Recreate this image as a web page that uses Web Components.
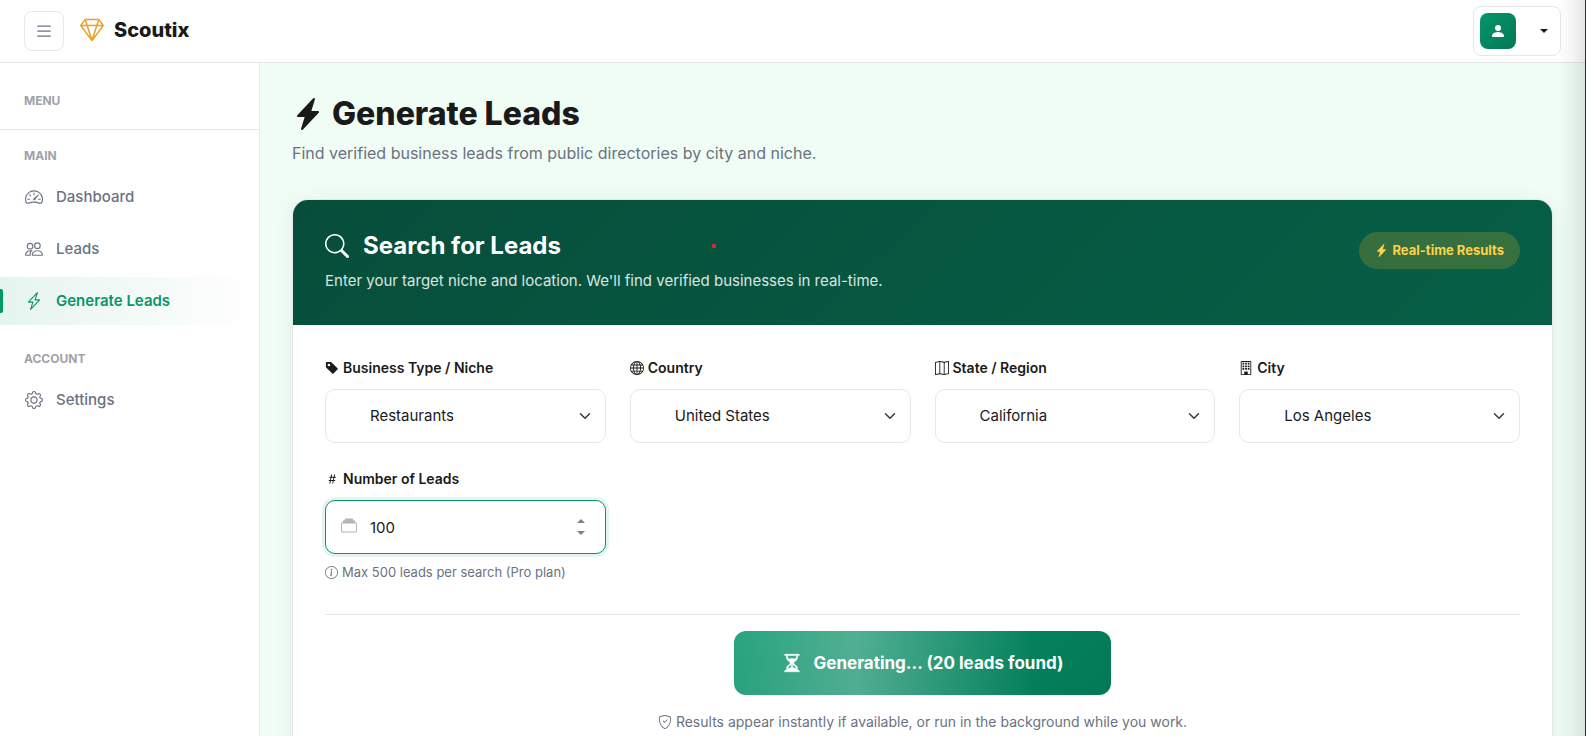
<!DOCTYPE html>
<html lang="en">
<head>
<meta charset="UTF-8">
<meta name="viewport" content="width=device-width, initial-scale=1.0">
<title>Scoutix - Generate Leads</title>
<style>
  :root {
    --brand: #059669;
    --brand-dark: #047857;
    --brand-deep: #064e3b;
    --page: #f0fdf4;
    --ink: #1a1a1a;
    --muted: #6b7280;
    --faint: #a1a1aa;
    --line: #e5e7eb;
    --gold: #fcd34d;
  }
  html, body {
    margin: 0;
    height: 100%;
    overflow: hidden;
  }
  body {
    background: var(--page);
    color: var(--ink);
    font-family: Inter, "Liberation Sans", sans-serif;
    font-size: 15px;
    line-height: 24px;
  }
</style>
</head>
<body>
<sx-app>
  <sx-topbar slot="top" brand="Scoutix"></sx-topbar>
  <sx-sidebar slot="side">
    <sx-nav-group label="Main">
      <sx-nav-item icon="speedometer" href="#dashboard">Dashboard</sx-nav-item>
      <sx-nav-item icon="people" href="#leads">Leads</sx-nav-item>
      <sx-nav-item icon="bolt" href="#generate" active>Generate Leads</sx-nav-item>
    </sx-nav-group>
    <sx-nav-group label="Account">
      <sx-nav-item icon="gear" href="#settings">Settings</sx-nav-item>
    </sx-nav-group>
  </sx-sidebar>
  <sx-page-title icon="bolt-fill" heading="Generate Leads">Find verified business leads from public directories by city and niche.</sx-page-title>
  <sx-search-card heading="Search for Leads" badge="Real-time Results">
    <span slot="intro">Enter your target niche and location. We'll find verified businesses in real-time.</span>
    <sx-select icon="tag" label="Business Type / Niche" value="Restaurants"></sx-select>
    <sx-select icon="globe" label="Country" value="United States"></sx-select>
    <sx-select icon="map" label="State / Region" value="California"></sx-select>
    <sx-select icon="building" label="City" value="Los Angeles"></sx-select>
    <sx-number icon="hash" label="Number of Leads" value="100" max="500">Max 500 leads per search (Pro plan)</sx-number>
    <sx-submit slot="actions" note="Results appear instantly if available, or run in the background while you work.">Generating... (20 leads found)</sx-submit>
  </sx-search-card>
</sx-app>

<script>
const ICONS = {
  list: '<path d="M2.5 12a.5.5 0 0 1 .5-.5h10a.5.5 0 0 1 0 1H3a.5.5 0 0 1-.5-.5m0-4a.5.5 0 0 1 .5-.5h10a.5.5 0 0 1 0 1H3a.5.5 0 0 1-.5-.5m0-4a.5.5 0 0 1 .5-.5h10a.5.5 0 0 1 0 1H3a.5.5 0 0 1-.5-.5"/>',
  gem: '<path d="M3.1.7a.5.5 0 0 1 .4-.2h9a.5.5 0 0 1 .4.2l2.976 3.974c.149.185.156.45.01.644L8.4 15.3a.5.5 0 0 1-.8 0L.1 5.3a.5.5 0 0 1 0-.6zm11.386 3.785-1.806-2.41-.776 2.413zm-3.633.004.961-2.989H4.186l.963 2.995zM5.47 5.495 8 13.366l2.532-7.876zm-1.371-.999-.78-2.422-1.818 2.425zM1.499 5.5l5.113 6.817-2.192-6.82zm7.889 6.817 5.123-6.83-2.928.002z"/>',
  person: '<path d="M3 14s-1 0-1-1 1-4 6-4 6 3 6 4-1 1-1 1zm5-6a3 3 0 1 0 0-6 3 3 0 0 0 0 6"/>',
  speedometer: '<path d="M8 4a.5.5 0 0 1 .5.5V6a.5.5 0 0 1-1 0V4.5A.5.5 0 0 1 8 4M3.732 5.732a.5.5 0 0 1 .707 0l.915.914a.5.5 0 1 1-.708.708l-.914-.915a.5.5 0 0 1 0-.707M2 10a.5.5 0 0 1 .5-.5h1.586a.5.5 0 0 1 0 1H2.5A.5.5 0 0 1 2 10m9.5 0a.5.5 0 0 1 .5-.5h1.5a.5.5 0 0 1 0 1H12a.5.5 0 0 1-.5-.5m.754-4.246a.39.39 0 0 0-.527-.02L7.547 9.31a.91.91 0 1 0 1.302 1.258l3.434-4.297a.39.39 0 0 0-.029-.518z"/><path fill-rule="evenodd" d="M0 10a8 8 0 1 1 15.547 2.661c-.442 1.253-1.845 1.602-2.932 1.25C11.309 13.488 9.475 13 8 13c-1.474 0-3.31.488-4.615.911-1.087.352-2.49.003-2.932-1.25A8 8 0 0 1 0 10m8-7a7 7 0 0 0-6.603 9.329c.203.575.923.876 1.68.63C4.397 12.533 6.358 12 8 12s3.604.532 4.923.96c.757.245 1.477-.056 1.68-.631A7 7 0 0 0 8 3"/>',
  people: '<path d="M15 14s1 0 1-1-1-4-5-4-5 3-5 4 1 1 1 1zm-7.978-1L7 12.996c.001-.264.167-1.03.76-1.72C8.312 10.629 9.282 10 11 10c1.717 0 2.687.63 3.24 1.276.593.69.758 1.457.76 1.72l-.008.002-.014.002zM11 7a2 2 0 1 0 0-4 2 2 0 0 0 0 4m3-2a3 3 0 1 1-6 0 3 3 0 0 1 6 0M6.936 9.28a6 6 0 0 0-1.23-.247A7 7 0 0 0 5 9c-4 0-5 3-5 4q0 1 1 1h4.216A2.24 2.24 0 0 1 5 13c0-1.01.377-2.042 1.09-2.904.243-.294.526-.569.846-.816M4.92 10A5.5 5.5 0 0 0 4 13H1c0-.26.164-1.03.76-1.724.545-.636 1.492-1.256 3.16-1.275ZM1.5 5.5a3 3 0 1 1 6 0 3 3 0 0 1-6 0m3-2a2 2 0 1 0 0 4 2 2 0 0 0 0-4"/>',
  bolt: '<path d="M11.251.068a.5.5 0 0 1 .227.58L9.677 6.5H13a.5.5 0 0 1 .364.843l-8 8.5a.5.5 0 0 1-.842-.49L6.323 9.5H3a.5.5 0 0 1-.364-.843l8-8.5a.5.5 0 0 1 .615-.09zM4.157 8.5H7a.5.5 0 0 1 .478.647L6.11 13.59l5.732-6.09H9a.5.5 0 0 1-.478-.647L9.89 2.41z"/>',
  'bolt-fill': '<path d="M11.251.068a.5.5 0 0 1 .227.58L9.677 6.5H13a.5.5 0 0 1 .364.843l-8 8.5a.5.5 0 0 1-.842-.49L6.323 9.5H3a.5.5 0 0 1-.364-.843l8-8.5a.5.5 0 0 1 .615-.09z"/>',
  gear: '<path d="M8 4.754a3.246 3.246 0 1 0 0 6.492 3.246 3.246 0 0 0 0-6.492M5.754 8a2.246 2.246 0 1 1 4.492 0 2.246 2.246 0 0 1-4.492 0"/><path d="M9.796 1.343c-.527-1.79-3.065-1.79-3.592 0l-.094.319a.873.873 0 0 1-1.255.52l-.292-.16c-1.64-.892-3.433.902-2.54 2.541l.159.292a.873.873 0 0 1-.52 1.255l-.319.094c-1.79.527-1.79 3.065 0 3.592l.319.094a.873.873 0 0 1 .52 1.255l-.16.292c-.892 1.64.901 3.434 2.541 2.54l.292-.159a.873.873 0 0 1 1.255.52l.094.319c.527 1.79 3.065 1.79 3.592 0l.094-.319a.873.873 0 0 1 1.255-.52l.292.16c1.64.893 3.434-.902 2.54-2.541l-.159-.292a.873.873 0 0 1 .52-1.255l.319-.094c1.79-.527 1.79-3.065 0-3.592l-.319-.094a.873.873 0 0 1-.52-1.255l.16-.292c.893-1.64-.902-3.433-2.541-2.54l-.292.159a.873.873 0 0 1-1.255-.52zm-2.633.283c.246-.835 1.428-.835 1.674 0l.094.319a1.873 1.873 0 0 0 2.693 1.115l.291-.16c.764-.415 1.6.42 1.184 1.185l-.159.292a1.873 1.873 0 0 0 1.116 2.692l.318.094c.835.246.835 1.428 0 1.674l-.319.094a1.873 1.873 0 0 0-1.115 2.693l.16.291c.415.764-.42 1.6-1.185 1.184l-.291-.159a1.873 1.873 0 0 0-2.693 1.116l-.094.318c-.246.835-1.428.835-1.674 0l-.094-.319a1.873 1.873 0 0 0-2.692-1.115l-.292.16c-.764.415-1.6-.42-1.184-1.185l.159-.291A1.873 1.873 0 0 0 1.945 8.93l-.319-.094c-.835-.246-.835-1.428 0-1.674l.319-.094A1.873 1.873 0 0 0 3.06 4.377l-.16-.292c-.415-.764.42-1.6 1.185-1.184l.292.159a1.873 1.873 0 0 0 2.692-1.115z"/>',
  search: '<path d="M11.742 10.344a6.5 6.5 0 1 0-1.397 1.398h-.001q.044.06.098.115l3.85 3.85a1 1 0 0 0 1.415-1.414l-3.85-3.85a1 1 0 0 0-.115-.1zM12 6.5a5.5 5.5 0 1 1-11 0 5.5 5.5 0 0 1 11 0"/>',
  tag: '<path d="M2 1a1 1 0 0 0-1 1v4.586a1 1 0 0 0 .293.707l7 7a1 1 0 0 0 1.414 0l4.586-4.586a1 1 0 0 0 0-1.414l-7-7A1 1 0 0 0 6.586 1zm4 3.5a1.5 1.5 0 1 1-3 0 1.5 1.5 0 0 1 3 0"/>',
  globe: '<path d="M0 8a8 8 0 1 1 16 0A8 8 0 0 1 0 8m7.5-6.923c-.67.204-1.335.82-1.887 1.855A8 8 0 0 0 5.145 4H7.5zM4.09 4a9.3 9.3 0 0 1 .64-1.539 7 7 0 0 1 .597-.933A7.03 7.03 0 0 0 2.255 4zm-.582 3.5c.03-.877.138-1.718.312-2.5H1.674a7 7 0 0 0-.656 2.5zM4.847 5a12.5 12.5 0 0 0-.338 2.5H7.5V5zM8.5 5v2.5h2.99a12.5 12.5 0 0 0-.337-2.5zM4.51 8.5a12.5 12.5 0 0 0 .337 2.5H7.5V8.5zm3.99 0V11h2.653c.187-.765.306-1.608.338-2.5zM5.145 12q.208.58.468 1.068c.552 1.035 1.218 1.65 1.887 1.855V12zm.182 2.472a7 7 0 0 1-.597-.933A9.3 9.3 0 0 1 4.09 12H2.255a7 7 0 0 0 3.072 2.472M3.82 11a13.7 13.7 0 0 1-.312-2.5h-2.49c.062.89.291 1.733.656 2.5zm6.853 3.472A7 7 0 0 0 13.745 12H11.91a9.3 9.3 0 0 1-.64 1.539 7 7 0 0 1-.597.933M8.5 12v2.923c.67-.204 1.335-.82 1.887-1.855q.26-.487.468-1.068zm3.68-1h2.146c.365-.767.594-1.61.656-2.5h-2.49a13.7 13.7 0 0 1-.312 2.5m2.802-3.5a7 7 0 0 0-.656-2.5H12.18c.174.782.282 1.623.312 2.5zM11.27 2.461c.247.464.462.98.64 1.539h1.835a7 7 0 0 0-3.072-2.472c.218.284.418.598.597.933M10.855 4a8 8 0 0 0-.468-1.068C9.835 1.897 9.17 1.282 8.5 1.077V4z"/>',
  map: '<path fill-rule="evenodd" d="M15.817.113A.5.5 0 0 1 16 .5v14a.5.5 0 0 1-.402.49l-5 1a.5.5 0 0 1-.196 0L5.5 15.01l-4.902.98A.5.5 0 0 1 0 15.5v-14a.5.5 0 0 1 .402-.49l5-1a.5.5 0 0 1 .196 0L10.5.99l4.902-.98a.5.5 0 0 1 .415.103M10 1.91l-4-.8v12.98l4 .8zm1 12.98 4-.8V1.11l-4 .8zm-6-.8V1.11l-4 .8v12.98z"/>',
  building: '<path d="M4 2h2v2H4zm3 0h2v2H7zm3 0h2v2h-2zM4 5h2v2H4zm3 0h2v2H7zm3 0h2v2h-2zM4 8h2v2H4zm3 0h2v2H7zm3 0h2v2h-2z"/><path d="M2 1a1 1 0 0 1 1-1h10a1 1 0 0 1 1 1v14a1 1 0 0 1-1 1H3a1 1 0 0 1-1-1zm11 0H3v14h3v-2.5a.5.5 0 0 1 .5-.5h3a.5.5 0 0 1 .5.5V15h3z"/>',
  hash: '<path d="M8.39 12.648a1 1 0 0 0-.015.18c0 .305.21.508.5.508.266 0 .492-.172.555-.477l.554-2.703h1.204c.421 0 .617-.234.617-.547 0-.312-.188-.53-.617-.53h-.985l.516-2.524h1.265c.43 0 .618-.227.618-.547 0-.313-.188-.524-.618-.524h-1.046l.476-2.304a1 1 0 0 0 .016-.164.51.51 0 0 0-.516-.516.54.54 0 0 0-.539.43l-.523 2.554H7.617l.477-2.304c.008-.04.015-.118.015-.164a.51.51 0 0 0-.523-.516.54.54 0 0 0-.531.43L6.53 5.484H5.414c-.43 0-.617.22-.617.532s.187.539.617.539h.906l-.515 2.523H4.609c-.421 0-.609.219-.609.531s.188.547.61.547h.976l-.516 2.492c-.008.04-.015.125-.015.18 0 .305.21.508.5.508.265 0 .492-.172.554-.477l.555-2.703h2.242zm-1-6.109h2.266l-.515 2.563H6.859l.532-2.563z"/>',
  collection: '<path d="M4.2.5h7.6l.7 2h1.5l.5 2h-13l.5-2h1.5zM0 13a1.5 1.5 0 0 0 1.5 1.5h13A1.5 1.5 0 0 0 16 13V6a1.5 1.5 0 0 0-1.5-1.5h-13A1.5 1.5 0 0 0 0 6zm1.5.5A.5.5 0 0 1 1 13V6a.5.5 0 0 1 .5-.5h13a.5.5 0 0 1 .5.5v7a.5.5 0 0 1-.5.5z"/>',
  info: '<path d="M8 15A7 7 0 1 1 8 1a7 7 0 0 1 0 14m0 1A8 8 0 1 0 8 0a8 8 0 0 0 0 16"/><path d="m8.93 6.588-2.29.287-.082.38.45.083c.294.07.352.176.288.469l-.738 3.468c-.194.897.105 1.319.808 1.319.545 0 1.178-.252 1.465-.598l.088-.416c-.2.176-.492.246-.686.246-.275 0-.375-.193-.304-.533zM9 4.5a1 1 0 1 1-2 0 1 1 0 0 1 2 0"/>',
  hourglass: '<path stroke="currentColor" stroke-width=".4" d="M2.5 15a.5.5 0 1 1 0-1h1v-1a4.5 4.5 0 0 1 2.557-4.06c.29-.139.443-.377.443-.59v-.7c0-.213-.154-.451-.443-.59A4.5 4.5 0 0 1 3.5 3V2h-1a.5.5 0 0 1 0-1h11a.5.5 0 0 1 0 1h-1v1a4.5 4.5 0 0 1-2.557 4.06c-.29.139-.443.377-.443.59v.7c0 .213.154.451.443.59A4.5 4.5 0 0 1 12.5 13v1h1a.5.5 0 0 1 0 1zm2-13v1c0 .537.12 1.045.337 1.5h6.326c.216-.455.337-.963.337-1.5V2zm3 6.35c0 .701-.478 1.236-1.011 1.492A3.5 3.5 0 0 0 4.5 13s.866-1.299 3-1.48zm1 0v3.17c2.134.181 3 1.48 3 1.48a3.5 3.5 0 0 0-1.989-3.158C8.978 9.586 8.5 9.052 8.5 8.351z"/>',
  shield: '<path d="M5.338 1.59a61 61 0 0 0-2.837.856.48.48 0 0 0-.328.39c-.554 4.157.726 7.19 2.253 9.188a10.7 10.7 0 0 0 2.287 2.233c.346.244.652.42.893.533q.18.085.293.118a1 1 0 0 0 .101.025 1 1 0 0 0 .1-.025q.114-.034.294-.118c.24-.113.547-.29.893-.533a10.7 10.7 0 0 0 2.287-2.233c1.527-1.997 2.807-5.031 2.253-9.188a.48.48 0 0 0-.328-.39c-.651-.213-1.75-.56-2.837-.855C9.552 1.29 8.531 1.067 8 1.067c-.53 0-1.552.223-2.662.524zM5.072.56C6.157.265 7.31 0 8 0s1.843.265 2.928.56c1.11.3 2.229.655 2.887.87a1.54 1.54 0 0 1 1.044 1.262c.596 4.477-.787 7.795-2.465 9.99a11.8 11.8 0 0 1-2.517 2.453 7 7 0 0 1-1.048.625c-.28.132-.581.24-.829.24s-.548-.108-.829-.24a7 7 0 0 1-1.048-.625 11.8 11.8 0 0 1-2.517-2.453C1.928 10.487.545 7.169 1.141 2.692A1.54 1.54 0 0 1 2.185 1.43 63 63 0 0 1 5.072.56"/><path d="M10.854 5.146a.5.5 0 0 1 0 .708l-3 3a.5.5 0 0 1-.708 0l-1.5-1.5a.5.5 0 1 1 .708-.708L7.5 7.793l2.646-2.647a.5.5 0 0 1 .708 0"/>',
  chevron: '<path fill="none" stroke="currentColor" stroke-linecap="round" stroke-linejoin="round" stroke-width="2" d="m2 5 6 6 6-6"/>',
  caret: '<path d="M0 4h16L8 12z"/>',
  'caret-up': '<path d="M0 12h16L8 4z"/>'
};

// Shared base: every component renders its template into an open shadow root.
class SxElement extends HTMLElement {
  connectedCallback() {
    if (this.shadowRoot) return;
    this.attachShadow({ mode: 'open' });
    this.shadowRoot.innerHTML = this.template();
  }

  attr(name) {
    return this.getAttribute(name) || '';
  }
}

class SxIcon extends SxElement {
  template() {
    return `
      <style>
        :host { display: inline-block; flex: none; width: 16px; height: 16px; }
        svg { display: block; width: 100%; height: 100%; fill: currentColor; }
      </style>
      <svg viewBox="0 0 16 16" aria-hidden="true">${ICONS[this.attr('name')]}</svg>
    `;
  }
}

class SxApp extends SxElement {
  template() {
    return `
      <style>
        :host {
          display: grid;
          grid-template: auto minmax(0, 1fr) / 260px minmax(0, 1fr);
          height: 100vh;
          padding-right: 1px;
          box-sizing: border-box;
        }
        .top { grid-column: 1 / -1; }
        main {
          padding: 32px;
          overflow-y: auto;
          scrollbar-width: none;
        }
        /* Window edge with its shade, over the page */
        .edge {
          position: fixed;
          inset: 0 0 0 auto;
          width: 28px;
          box-sizing: border-box;
          border-right: 1px solid #27302d;
          background: linear-gradient(to right, rgba(0, 0, 0, 0), rgba(0, 0, 0, 0.04) 50%, rgba(0, 0, 0, 0.1));
          pointer-events: none;
        }
      </style>
      <div class="top"><slot name="top"></slot></div>
      <slot name="side"></slot>
      <main><slot></slot></main>
      <div class="edge"></div>
    `;
  }
}

class SxTopbar extends SxElement {
  template() {
    return `
      <style>
        :host { display: block; }
        header {
          display: flex;
          align-items: center;
          gap: 16px;
          height: 62px;
          padding: 0 24px;
          background: #fff;
          border-bottom: 1px solid var(--line);
        }
        button {
          display: flex;
          align-items: center;
          box-sizing: border-box;
          background: #fff;
          border: 1px solid var(--line);
          border-radius: 8px;
          cursor: pointer;
        }
        .toggle {
          justify-content: center;
          width: 40px;
          height: 40px;
          padding: 0;
          color: var(--muted);
        }
        .toggle sx-icon { width: 20px; height: 20px; }
        .brand {
          display: flex;
          align-items: center;
          gap: 10px;
          padding-bottom: 2px;
          color: var(--ink);
          font-size: 20px;
          font-weight: 800;
          text-decoration: none;
        }
        .brand sx-icon { width: 24px; height: 24px; color: #e9a12b; }
        .user {
          gap: 24px;
          height: 50px;
          margin-left: auto;
          padding: 0 12px 0 6px;
          color: var(--ink);
        }
        .avatar {
          display: grid;
          place-items: center;
          width: 36px;
          height: 36px;
          border-radius: 8px;
          background: linear-gradient(135deg, var(--brand), var(--brand-dark));
          color: #fff;
        }
        .user > sx-icon { width: 8px; height: 8px; }
      </style>
      <header>
        <button class="toggle" type="button" aria-label="Toggle menu"><sx-icon name="list"></sx-icon></button>
        <a class="brand" href="#home"><sx-icon name="gem"></sx-icon>${this.attr('brand')}</a>
        <button class="user" type="button" aria-label="Account">
          <span class="avatar"><sx-icon name="person"></sx-icon></span>
          <sx-icon name="caret"></sx-icon>
        </button>
      </header>
    `;
  }
}

class SxSidebar extends SxElement {
  template() {
    return `
      <style>
        :host {
          display: block;
          background: #fff;
          border-right: 1px solid var(--line);
        }
        .head {
          padding: 28px 24px 18px;
          border-bottom: 1px solid var(--line);
          color: var(--faint);
          font-size: 12px;
          font-weight: 700;
          line-height: 20px;
          text-transform: uppercase;
        }
        nav {
          display: flex;
          flex-direction: column;
          gap: 24px;
          padding-top: 16px;
        }
      </style>
      <div class="head">Menu</div>
      <nav><slot></slot></nav>
    `;
  }
}

class SxNavGroup extends SxElement {
  template() {
    return `
      <style>
        :host { display: flex; flex-direction: column; gap: 4px; }
        .label {
          padding: 0 24px 3px;
          color: var(--faint);
          font-size: 12px;
          font-weight: 700;
          line-height: 20px;
          text-transform: uppercase;
        }
      </style>
      <div class="label">${this.attr('label')}</div>
      <slot></slot>
    `;
  }
}

class SxNavItem extends SxElement {
  template() {
    return `
      <style>
        :host { display: block; }
        a {
          position: relative;
          display: flex;
          align-items: center;
          gap: 12px;
          height: 48px;
          padding: 0 24px;
          color: var(--muted);
          font-weight: 500;
          text-decoration: none;
        }
        sx-icon { width: 18px; height: 18px; padding: 0 1px; }
        :host([active]) a {
          background: linear-gradient(90deg, rgba(5, 150, 105, 0.1), rgba(5, 150, 105, 0));
          color: var(--brand);
          font-weight: 600;
        }
        :host([active]) a::before {
          content: "";
          position: absolute;
          left: 0;
          top: 12px;
          bottom: 12px;
          width: 3px;
          border-radius: 0 2px 2px 0;
          background: var(--brand);
        }
      </style>
      <a href="${this.attr('href')}"><sx-icon name="${this.attr('icon')}"></sx-icon><slot></slot></a>
    `;
  }
}

class SxPageTitle extends SxElement {
  template() {
    return `
      <style>
        :host { display: block; margin-bottom: 34px; }
        h1 {
          display: flex;
          align-items: center;
          gap: 8px;
          margin: 0 0 8px;
          font-size: 32px;
          font-weight: 800;
          line-height: 38px;
        }
        h1 sx-icon { width: 32px; height: 32px; }
        p {
          margin: 0;
          color: var(--muted);
          font-size: 16px;
          line-height: 24px;
        }
      </style>
      <h1><sx-icon name="${this.attr('icon')}"></sx-icon>${this.attr('heading')}</h1>
      <p><slot></slot></p>
    `;
  }
}

class SxSearchCard extends SxElement {
  template() {
    return `
      <style>
        :host {
          display: block;
          border: 1px solid var(--line);
          border-radius: 16px;
          overflow: hidden;
          background: #fff;
          box-shadow: 0 4px 24px rgba(0, 0, 0, 0.06);
        }
        header {
          position: relative;
          display: flex;
          align-items: flex-start;
          justify-content: space-between;
          padding: 32px 32px 31px;
          background: linear-gradient(135deg, var(--brand-deep), #065f46);
          color: #fff;
        }
        h2 {
          display: flex;
          align-items: center;
          gap: 14px;
          margin: 0 0 8px;
          font-size: 24px;
          font-weight: 700;
          line-height: 28px;
        }
        h2 sx-icon { width: 24px; height: 24px; }
        p { margin: 0; line-height: 26px; opacity: 0.85; }
        .badge {
          display: flex;
          align-items: center;
          gap: 4px;
          padding: 8px 16px;
          border-radius: 20px;
          background: rgba(251, 191, 36, 0.2);
          color: var(--gold);
          font-size: 13px;
          font-weight: 700;
          line-height: 21px;
        }
        .badge sx-icon { width: 13px; height: 13px; }
        /* Pointer mark */
        .mark {
          position: absolute;
          left: 419px;
          top: 44px;
          width: 4px;
          height: 4px;
          border-radius: 1px;
          background: #dc2638;
        }
        form { padding: 32px; }
        .fields {
          display: grid;
          grid-template-columns: repeat(4, minmax(0, 1fr));
          gap: 25px 24px;
          padding-bottom: 32px;
          border-bottom: 1px solid var(--line);
        }
      </style>
      <header>
        <div>
          <h2><sx-icon name="search"></sx-icon>${this.attr('heading')}</h2>
          <p><slot name="intro"></slot></p>
        </div>
        <span class="badge"><sx-icon name="bolt-fill"></sx-icon>${this.attr('badge')}</span>
        <span class="mark"></span>
      </header>
      <form>
        <div class="fields"><slot></slot></div>
        <slot name="actions"></slot>
      </form>
    `;
  }
}

const FIELD_STYLE = `
  :host { display: block; }
  label {
    display: flex;
    align-items: center;
    gap: 4px;
    margin-bottom: 10px;
    font-size: 14px;
    font-weight: 600;
    line-height: 22px;
  }
  label sx-icon { width: 14px; height: 14px; }
  .control { position: relative; }
  select, input {
    display: block;
    box-sizing: border-box;
    width: 100%;
    height: 54px;
    margin: 0;
    padding: 0 44px;
    appearance: none;
    border: 1px solid var(--line);
    border-radius: 10px;
    outline: none;
    background: #fff;
    color: var(--ink);
    font: inherit;
  }
`;

class SxSelect extends SxElement {
  template() {
    return `
      <style>
        ${FIELD_STYLE}
        .control sx-icon {
          position: absolute;
          right: 15px;
          top: 21px;
          width: 12px;
          height: 12px;
          color: #343a40;
          pointer-events: none;
        }
      </style>
      <label for="field"><sx-icon name="${this.attr('icon')}"></sx-icon>${this.attr('label')}</label>
      <div class="control">
        <select id="field"><option>${this.attr('value')}</option></select>
        <sx-icon name="chevron"></sx-icon>
      </div>
    `;
  }
}

class SxNumber extends SxElement {
  template() {
    return `
      <style>
        ${FIELD_STYLE}
        input {
          appearance: textfield;
          border-color: var(--brand);
          box-shadow: 0 0 0 3px rgba(5, 150, 105, 0.1);
        }
        input::-webkit-inner-spin-button { display: none; }
        .lead {
          position: absolute;
          left: 16px;
          top: 18px;
          color: #b4b4ba;
        }
        .spin {
          position: absolute;
          right: 20px;
          top: 15px;
          display: grid;
        }
        .spin button {
          display: grid;
          place-items: center;
          width: 10px;
          height: 12px;
          padding: 0;
          border: 0;
          background: none;
          color: #808080;
        }
        .spin sx-icon { width: 8px; height: 8px; }
        .hint {
          display: flex;
          align-items: center;
          gap: 4px;
          margin-top: 8px;
          color: var(--muted);
          font-size: 13px;
          line-height: 20px;
        }
        .hint sx-icon { width: 13px; height: 13px; }
      </style>
      <label for="field"><sx-icon name="${this.attr('icon')}"></sx-icon>${this.attr('label')}</label>
      <div class="control">
        <input id="field" type="number" min="1" max="${this.attr('max')}" value="${this.attr('value')}" aria-describedby="hint">
        <sx-icon class="lead" name="collection"></sx-icon>
        <span class="spin">
          <button type="button" aria-label="Increase"><sx-icon name="caret-up"></sx-icon></button>
          <button type="button" aria-label="Decrease"><sx-icon name="caret"></sx-icon></button>
        </span>
      </div>
      <div class="hint" id="hint"><sx-icon name="info"></sx-icon><span><slot></slot></span></div>
    `;
  }

  connectedCallback() {
    super.connectedCallback();
    const input = this.shadowRoot.querySelector('input');
    const [up, down] = this.shadowRoot.querySelectorAll('.spin button');
    up.addEventListener('click', () => input.stepUp());
    down.addEventListener('click', () => input.stepDown());
  }
}

class SxSubmit extends SxElement {
  template() {
    return `
      <style>
        :host {
          display: flex;
          flex-direction: column;
          align-items: center;
          gap: 16px;
          padding-top: 16px;
        }
        button {
          display: flex;
          align-items: center;
          gap: 12px;
          height: 64px;
          padding: 0 48px;
          border: 0;
          border-radius: 12px;
          background:
            linear-gradient(90deg, rgba(255, 255, 255, 0.14), rgba(255, 255, 255, 0.3) 32%, rgba(255, 255, 255, 0) 80%),
            linear-gradient(135deg, var(--brand), var(--brand-dark));
          color: #fff;
          font: inherit;
          font-size: 17px;
          font-weight: 700;
        }
        button sx-icon { width: 20px; height: 20px; }
        .note {
          display: flex;
          align-items: center;
          gap: 4px;
          color: var(--muted);
          font-size: 14px;
          line-height: 22px;
        }
        .note sx-icon { width: 14px; height: 14px; }
      </style>
      <button type="button"><sx-icon name="hourglass"></sx-icon><span><slot></slot></span></button>
      <div class="note"><sx-icon name="shield"></sx-icon>${this.attr('note')}</div>
    `;
  }
}

customElements.define('sx-icon', SxIcon);
customElements.define('sx-app', SxApp);
customElements.define('sx-topbar', SxTopbar);
customElements.define('sx-sidebar', SxSidebar);
customElements.define('sx-nav-group', SxNavGroup);
customElements.define('sx-nav-item', SxNavItem);
customElements.define('sx-page-title', SxPageTitle);
customElements.define('sx-search-card', SxSearchCard);
customElements.define('sx-select', SxSelect);
customElements.define('sx-number', SxNumber);
customElements.define('sx-submit', SxSubmit);
</script>
</body>
</html>
